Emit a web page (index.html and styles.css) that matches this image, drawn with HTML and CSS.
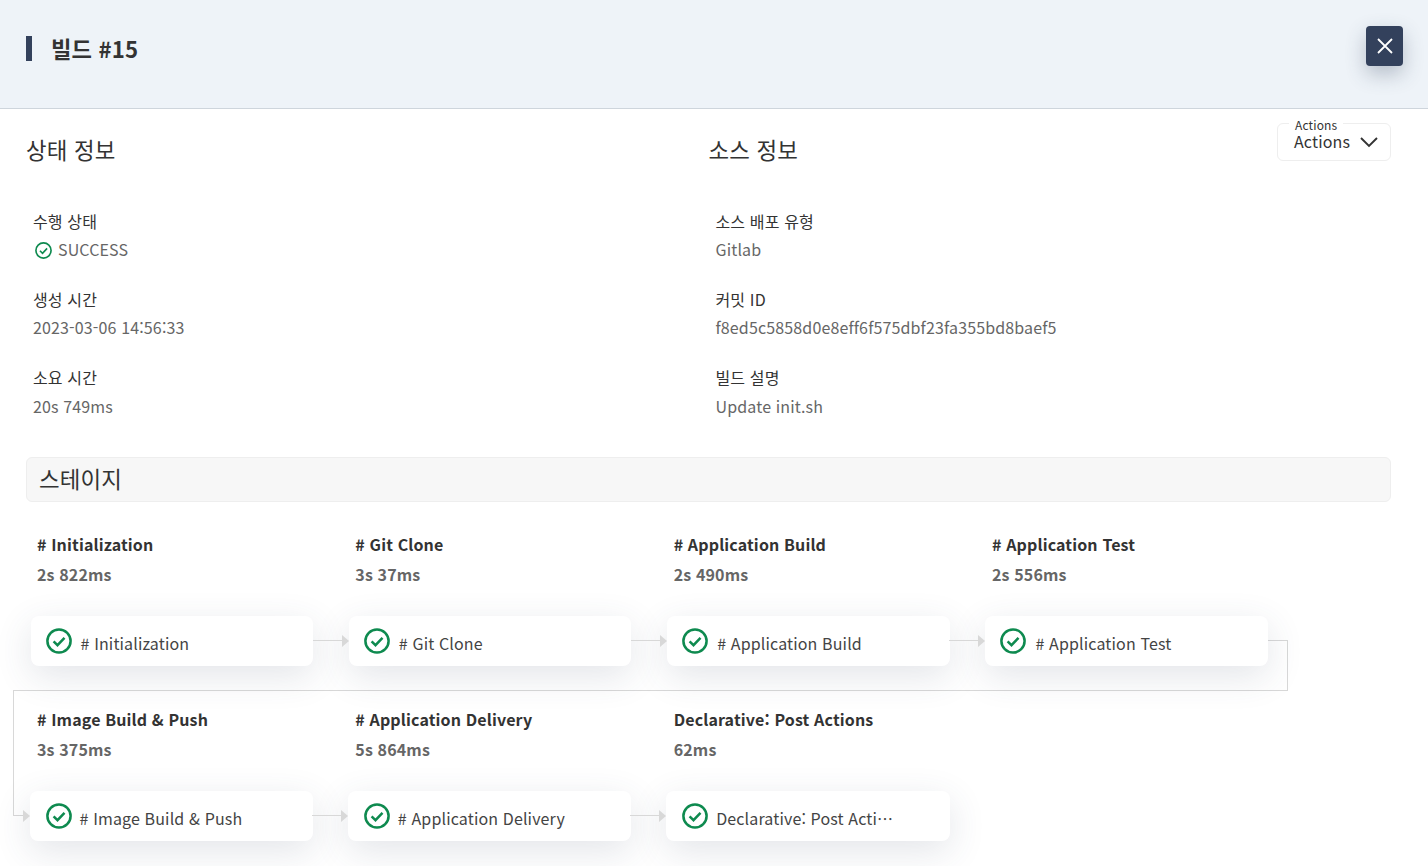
FILE: index.html
```html
<!DOCTYPE html>
<html lang="ko">

<head>
  <meta charset="UTF-8">
  <meta name="viewport" content="width=device-width, initial-scale=1.0">
  <title>빌드 #15</title>
  <link rel="stylesheet" href="styles.css">
</head>

<body>
  <svg class="icon-defs" width="0" height="0">
    <symbol id="check-circle" viewBox="0 0 26 26">
      <circle cx="13" cy="13" r="11.6" fill="none" stroke="currentColor" stroke-width="2.5"></circle>
      <path d="M7.6 13.4l3.9 3.8 7-7.4" fill="none" stroke="currentColor" stroke-width="2.5"></path>
    </symbol>
  </svg>

  <div class="modal-header">
    <h1 class="modal-title">빌드 #15</h1>
    <button class="close-btn">
      <svg width="16" height="16" viewBox="0 0 16 16">
        <path d="M1 1l14 14M15 1L1 15" fill="none" stroke="#fff" stroke-width="1.8"></path>
      </svg>
    </button>
  </div>

  <div class="modal-body">
    <div class="actions-select">
      <span class="actions-legend">Actions</span>
      <span class="actions-value">Actions</span>
      <svg class="actions-arrow" width="18" height="11" viewBox="0 0 18 11">
        <path d="M1 1l8 8 8-8" fill="none" stroke="#333" stroke-width="1.9"></path>
      </svg>
    </div>

    <div class="info-grid">
      <div class="info-col">
        <h2 class="info-heading">상태 정보</h2>
        <div class="info-item">
          <div class="info-label">수행 상태</div>
          <div class="info-value info-status">
            <svg class="status-icon" width="17" height="17"><use href="#check-circle"></use></svg>
            SUCCESS
          </div>
        </div>
        <div class="info-item">
          <div class="info-label">생성 시간</div>
          <div class="info-value">2023-03-06 14:56:33</div>
        </div>
        <div class="info-item">
          <div class="info-label">소요 시간</div>
          <div class="info-value">20s 749ms</div>
        </div>
      </div>
      <div class="info-col">
        <h2 class="info-heading">소스 정보</h2>
        <div class="info-item">
          <div class="info-label">소스 배포 유형</div>
          <div class="info-value">Gitlab</div>
        </div>
        <div class="info-item">
          <div class="info-label">커밋 ID</div>
          <div class="info-value">f8ed5c5858d0e8eff6f575dbf23fa355bd8baef5</div>
        </div>
        <div class="info-item">
          <div class="info-label">빌드 설명</div>
          <div class="info-value">Update init.sh</div>
        </div>
      </div>
    </div>

    <div class="stage-title">스테이지</div>

    <div class="pipeline">
      <div class="wrap-line">
        <div class="wrap-line-top"></div>
      </div>

      <div class="stage-row">
        <div class="stage">
          <div class="stage-name"># Initialization</div>
          <div class="stage-time">2s 822ms</div>
          <div class="stage-card">
            <svg class="card-icon" width="26" height="26"><use href="#check-circle"></use></svg>
            <span class="card-text"># Initialization</span>
          </div>
        </div>
        <div class="stage">
          <div class="stage-name"># Git Clone</div>
          <div class="stage-time">3s 37ms</div>
          <div class="stage-card has-arrow">
            <svg class="card-icon" width="26" height="26"><use href="#check-circle"></use></svg>
            <span class="card-text"># Git Clone</span>
          </div>
        </div>
        <div class="stage">
          <div class="stage-name"># Application Build</div>
          <div class="stage-time">2s 490ms</div>
          <div class="stage-card has-arrow">
            <svg class="card-icon" width="26" height="26"><use href="#check-circle"></use></svg>
            <span class="card-text"># Application Build</span>
          </div>
        </div>
        <div class="stage">
          <div class="stage-name"># Application Test</div>
          <div class="stage-time">2s 556ms</div>
          <div class="stage-card has-arrow">
            <svg class="card-icon" width="26" height="26"><use href="#check-circle"></use></svg>
            <span class="card-text"># Application Test</span>
          </div>
        </div>
      </div>

      <div class="stage-row stage-row-second">
        <div class="stage">
          <div class="stage-name"># Image Build &amp; Push</div>
          <div class="stage-time">3s 375ms</div>
          <div class="stage-card has-arrow">
            <svg class="card-icon" width="26" height="26"><use href="#check-circle"></use></svg>
            <span class="card-text"># Image Build &amp; Push</span>
          </div>
        </div>
        <div class="stage">
          <div class="stage-name"># Application Delivery</div>
          <div class="stage-time">5s 864ms</div>
          <div class="stage-card has-arrow">
            <svg class="card-icon" width="26" height="26"><use href="#check-circle"></use></svg>
            <span class="card-text"># Application Delivery</span>
          </div>
        </div>
        <div class="stage">
          <div class="stage-name">Declarative: Post Actions</div>
          <div class="stage-time">62ms</div>
          <div class="stage-card has-arrow">
            <svg class="card-icon" width="26" height="26"><use href="#check-circle"></use></svg>
            <span class="card-text card-text-short">Declarative: Post Actions</span>
          </div>
        </div>
      </div>
    </div>
  </div>
</body>

</html>
```

FILE: styles.css
```css
* {
  margin: 0;
  padding: 0;
  box-sizing: border-box;
}

html,
body {
  height: 866px;
  overflow: hidden;
}

body {
  background-color: #fff;
  color: #333;
  font-family: "Noto Sans CJK KR", "Noto Sans", sans-serif;
  letter-spacing: 0.14px;
}

.icon-defs {
  position: absolute;
}

.modal-header {
  display: flex;
  justify-content: space-between;
  height: 109px;
  padding: 26px 25px 0 26px;
  background-color: #eef3f8;
  border-bottom: 1px solid #ced5dc;
}

.modal-title {
  height: 25px;
  margin-top: 10px;
  padding-left: 19px;
  border-left: 6px solid #33415c;
  font-size: 22.2px;
  font-weight: 700;
  line-height: 25px;
}

.close-btn {
  display: flex;
  align-items: center;
  justify-content: center;
  width: 37px;
  height: 40px;
  background-color: #33415c;
  border: none;
  border-radius: 4px;
  box-shadow: 0 8px 20px rgba(51, 65, 92, 0.3);
}

.modal-body {
  position: relative;
  padding: 0 37px 0 26px;
}

.actions-select {
  position: absolute;
  top: 14px;
  right: 37px;
  display: flex;
  align-items: center;
  justify-content: space-between;
  width: 114px;
  height: 38px;
  padding: 0 12px 0 16px;
  border: 1px solid #eee;
  border-radius: 6px;
}

.actions-legend {
  position: absolute;
  top: -7px;
  left: 11px;
  padding: 0 6px;
  background-color: #fff;
  font-size: 12px;
  line-height: 16px;
}

.actions-value {
  margin-top: -3px;
  font-size: 16px;
  line-height: 20px;
}

.info-grid {
  display: grid;
  grid-template-columns: 682.5px 682.5px;
  height: 348px;
  padding-top: 22px;
}

.info-heading {
  height: 51px;
  margin-bottom: 24px;
  font-size: 22.4px;
  font-weight: 400;
  line-height: 36px;
}

.info-item {
  height: 78.2px;
  padding: 3px 7px 0;
}

.info-label {
  height: 28.2px;
  font-size: 16px;
  line-height: 24px;
}

.info-value {
  font-size: 16px;
  line-height: 24px;
  color: #666;
}

.info-status {
  display: flex;
  align-items: center;
  gap: 6px;
}

.status-icon {
  margin-left: 2px;
  margin-top: 2px;
  color: #0e8a4f;
}

.stage-title {
  height: 45px;
  padding-left: 12px;
  background-color: #f7f7f7;
  border: 1px solid #eee;
  border-radius: 6px;
  font-size: 22.4px;
  line-height: 41px;
}

.pipeline {
  position: relative;
  margin-top: 29px;
}

/* elbow from the last card of row 1 to the first card of row 2 */
.wrap-line {
  position: absolute;
  top: 109px;
  left: -13px;
  width: 1275px;
  height: 51px;
  border-right: 1px solid #d8d8d8;
  border-bottom: 1px solid #d8d8d8;
}

.wrap-line-top {
  position: absolute;
  top: 0;
  right: 0;
  width: 30px;
  height: 1px;
  background-color: #d8d8d8;
}

.wrap-line::before {
  content: "";
  position: absolute;
  top: 50px;
  left: 0;
  width: 1px;
  height: 125px;
  background-color: #d8d8d8;
}

.wrap-line::after {
  content: "";
  position: absolute;
  top: 175px;
  left: 0;
  width: 11px;
  height: 1px;
  background-color: #d8d8d8;
}

.stage-row {
  position: relative;
  display: grid;
  grid-template-columns: repeat(4, 318.33px);
  height: 175px;
  margin-left: 4.5px;
}

.stage-row-second {
  margin-left: 3.5px;
}

.stage-name {
  padding-left: 6.5px;
  font-size: 16px;
  font-weight: 700;
  line-height: 26px;
}

.stage-time {
  margin-top: 4px;
  padding-left: 6.5px;
  font-size: 16px;
  font-weight: 700;
  line-height: 26px;
  color: #666;
}

.stage-card {
  position: relative;
  display: flex;
  align-items: center;
  gap: 9px;
  width: 282.5px;
  height: 50px;
  margin-top: 29px;
  padding: 0 15px;
  background-color: #fff;
  border-radius: 8px;
  box-shadow: 0 10px 36px rgba(60, 70, 100, 0.14);
}

.stage-row-second .stage-name,
.stage-row-second .stage-time {
  padding-left: 7.5px;
}

.stage-row-second .stage-card {
  width: 283.5px;
  gap: 8px;
  padding-left: 16px;
}

.has-arrow::before {
  content: "";
  position: absolute;
  top: 24px;
  left: -36px;
  width: 29px;
  height: 1px;
  background-color: #d8d8d8;
}

.has-arrow::after {
  content: "";
  position: absolute;
  top: 18.5px;
  left: -7px;
  border-left: 7px solid #d8d8d8;
  border-top: 6.5px solid transparent;
  border-bottom: 6.5px solid transparent;
}

.stage-row-second .stage:first-child .has-arrow::before {
  display: none;
}

.card-icon {
  flex: none;
  color: #0e8a4f;
}

.card-text {
  margin-top: 4px;
  font-size: 16px;
  line-height: 24px;
  color: #444;
  white-space: nowrap;
}

.card-text-short {
  display: block;
  max-width: 177px;
  overflow: hidden;
  text-overflow: ellipsis;
}
```
